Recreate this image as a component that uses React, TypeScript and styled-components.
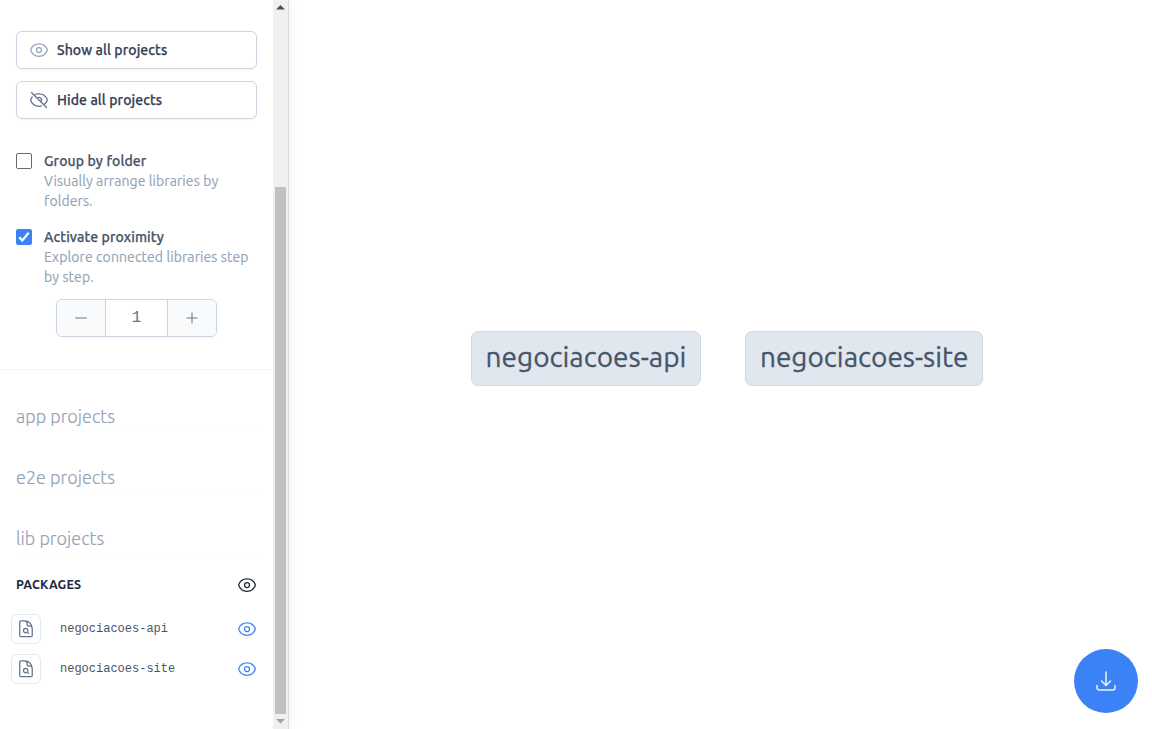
import React from 'react';
import styled, { createGlobalStyle } from 'styled-components';
import {
  HiOutlineArrowDownTray,
  HiOutlineDocumentMagnifyingGlass,
  HiOutlineEye,
  HiOutlineEyeSlash,
  HiOutlinePlus,
} from 'react-icons/hi2';

const GlobalStyle = createGlobalStyle`
  *, *::before, *::after { box-sizing: border-box; }
  body { margin: 0; background: #fff; overflow: hidden; }
  body, button, input { font-family: Ubuntu, "Noto Sans", sans-serif; }
  h2, h3, p, ul { margin: 0; padding: 0; font-weight: inherit; }
  svg { display: block; flex: none; }
`;

const Page = styled.div`
  display: flex;
  height: 729px;
  width: 1152px;
  background: #fff;
`;

const Sidebar = styled.aside`
  display: flex;
  width: 289px;
  flex: none;
  border-right: 1px solid #dcdcdc;
  box-shadow: 0 0 10px rgba(0, 0, 0, 0.07);
`;

const SidebarBody = styled.div`
  width: 273px;
  flex: none;
  overflow: hidden;
`;

const ScrollTrack = styled.div`
  width: 15px;
  flex: none;
  display: flex;
  flex-direction: column;
  align-items: center;
  background: #f0f0f0;
`;

const ScrollArrow = styled.svg`
  width: 15px;
  height: 15px;
`;

const ScrollThumb = styled.div`
  width: 11px;
  height: 527px;
  margin-top: 172px;
  background: #c1c1c1;
`;

const Actions = styled.div`
  display: flex;
  flex-direction: column;
  gap: 12px;
  padding: 31px 16px 0;
`;

const ActionButton = styled.button<{ $iconColor: string }>`
  display: flex;
  align-items: center;
  gap: 8px;
  height: 38px;
  padding: 0 12px;
  border: 1px solid #cbd5e1;
  border-radius: 6px;
  background: #fff;
  color: #334155;
  font-size: 14px;
  font-weight: 500;
  line-height: 20px;
  letter-spacing: 0.09px;
  -webkit-text-stroke: 0.25px #334155;
  white-space: nowrap;
  box-shadow: 0 1px 2px rgba(0, 0, 0, 0.05);
  svg { color: ${p => p.$iconColor}; }
`;

const Options = styled.div`
  display: flex;
  flex-direction: column;
  gap: 16px;
  padding: 32px 16px 0;
`;

const Option = styled.label`
  display: flex;
  align-items: flex-start;
  gap: 12px;
`;

const Checkbox = styled.span<{ $checked?: boolean }>`
  display: flex;
  width: 16px;
  height: 16px;
  margin-top: 2px;
  flex: none;
  border: 1px solid ${p => (p.$checked ? '#3b82f6' : '#6b6b6b')};
  border-radius: 2px;
  background: ${p => (p.$checked ? '#3b82f6' : '#fff')};
`;

const OptionText = styled.div`
  font-size: 14px;
  line-height: 20px;
  letter-spacing: 0.09px;
  color: #94a3b8;
  -webkit-text-stroke: 0.15px #94a3b8;
`;

const OptionTitle = styled.p`
  color: #475569;
  font-weight: 500;
  letter-spacing: 0.12px;
  -webkit-text-stroke: 0.25px #475569;
`;

const Stepper = styled.div`
  display: flex;
  width: 161px;
  height: 38px;
  margin: 12px 0 0 56px;
  border: 1px solid #cbd5e1;
  border-radius: 6px;
  overflow: hidden;
  box-shadow: 0 1px 2px rgba(0, 0, 0, 0.05);
`;

const StepButton = styled.button`
  display: flex;
  align-items: center;
  justify-content: center;
  width: 48px;
  padding: 0;
  border: 0;
  background: #f8fafc;
  color: #64748b;
`;

const StepValue = styled.span`
  width: 63px;
  border: solid #cbd5e1;
  border-width: 0 1px;
  background: #fff;
  color: #64748b;
  font: 16px/36px "Liberation Mono", monospace;
  text-align: center;
`;

const Divider = styled.div`
  height: 1px;
  margin-top: 32px;
  background: #f4f5f7;
`;

const Projects = styled.div`
  padding: 32px 16px 0;
`;

const GroupTitle = styled.h2`
  height: 29px;
  margin-bottom: 32px;
  border-bottom: 1px solid #fcfcfd;
  color: #94a3b8;
  font-size: 18px;
  font-weight: 300;
  line-height: 28px;
  letter-spacing: 0.03px;
  -webkit-text-stroke: 0.15px #94a3b8;
  white-space: nowrap;

  &:last-of-type { margin-bottom: 0; }
`;

const FolderHeader = styled.div`
  display: flex;
  justify-content: space-between;
  align-items: center;
  height: 20px;
  margin-top: 22px;
  color: #1e293b;
`;

const FolderTitle = styled.h3`
  padding-bottom: 2px;
  font-size: 12.5px;
  font-weight: 700;
  line-height: 18px;
  letter-spacing: 0.15px;
`;

const PackageList = styled.ul`
  display: flex;
  flex-direction: column;
  gap: 10px;
  margin: 19px 0 0 -5px;
  list-style: none;
`;

const PackageRow = styled.li`
  display: flex;
  align-items: center;
  height: 30px;
  color: #3b82f6;
`;

const FocusButton = styled.button`
  display: flex;
  align-items: center;
  justify-content: center;
  width: 30px;
  height: 30px;
  padding: 0;
  border: 1px solid #e2e8f0;
  border-radius: 6px;
  background: #fff;
  color: #64748b;
`;

const PackageName = styled.span`
  flex: 1;
  margin-left: 19px;
  color: #475569;
  font: 12px/16px "Liberation Mono", monospace;
`;

const Canvas = styled.main`
  position: relative;
  flex: 1;
`;

const Node = styled.div<{ $x: number; $width: number }>`
  position: absolute;
  top: 331px;
  left: ${p => p.$x}px;
  width: ${p => p.$width}px;
  height: 55px;
  border: 1px solid #d0dae5;
  border-radius: 7px;
  background: #e1e7ef;
  color: #475569;
  font-size: 28px;
  line-height: 50px;
  text-align: center;
  -webkit-text-stroke: 0.3px #475569;
  white-space: nowrap;
`;

const DownloadButton = styled.button`
  position: absolute;
  right: 14px;
  bottom: 16px;
  display: flex;
  align-items: center;
  justify-content: center;
  width: 64px;
  height: 64px;
  padding: 0;
  border: 0;
  border-radius: 50%;
  background: #3b82f6;
  color: #f1f5f9;
`;

const packages = ['negociacoes-api', 'negociacoes-site'];

export default function App() {
  return (
    <Page>
      <GlobalStyle />
      <Sidebar>
        <SidebarBody>
          <Actions>
            <ActionButton $iconColor="#94a3b8">
              <HiOutlineEye size={20} />
              Show all projects
            </ActionButton>
            <ActionButton $iconColor="#64748b">
              <HiOutlineEyeSlash size={20} />
              Hide all projects
            </ActionButton>
          </Actions>

          <Options>
            <Option>
              <Checkbox />
              <OptionText>
                <OptionTitle>Group by folder</OptionTitle>
                <p>Visually arrange libraries by folders.</p>
              </OptionText>
            </Option>
            <Option>
              <Checkbox $checked>
                <svg width="14" height="14" viewBox="0 0 14 14" fill="none" stroke="#fff" strokeWidth="2.2">
                  <path d="M2.2 7.4 5.3 10.4 11.7 2.7" />
                </svg>
              </Checkbox>
              <OptionText>
                <OptionTitle>Activate proximity</OptionTitle>
                <p>Explore connected libraries step by step.</p>
              </OptionText>
            </Option>
          </Options>

          <Stepper>
            <StepButton>
              <svg width="16" height="16" viewBox="0 0 24 24" fill="none" stroke="currentColor" strokeWidth="1.5" strokeLinecap="round">
                <path d="M20 12H4" />
              </svg>
            </StepButton>
            <StepValue>1</StepValue>
            <StepButton><HiOutlinePlus size={16} /></StepButton>
          </Stepper>

          <Divider />

          <Projects>
            <GroupTitle>app projects</GroupTitle>
            <GroupTitle>e2e projects</GroupTitle>
            <GroupTitle>lib projects</GroupTitle>
            <FolderHeader>
              <FolderTitle>PACKAGES</FolderTitle>
              <HiOutlineEye size={20} />
            </FolderHeader>
            <PackageList>
              {packages.map(name => (
                <PackageRow key={name}>
                  <FocusButton><HiOutlineDocumentMagnifyingGlass size={20} /></FocusButton>
                  <PackageName>{name}</PackageName>
                  <HiOutlineEye size={20} />
                </PackageRow>
              ))}
            </PackageList>
          </Projects>
        </SidebarBody>
        <ScrollTrack>
          <ScrollArrow viewBox="0 0 15 15"><path d="M3 9.5 7.5 5 12 9.5z" fill="#505050" /></ScrollArrow>
          <ScrollThumb />
          <ScrollArrow viewBox="0 0 15 15"><path d="M3 5 7.5 9.5 12 5z" fill="#a3a3a3" /></ScrollArrow>
        </ScrollTrack>
      </Sidebar>
      <Canvas>
        <Node $x={182} $width={230}>negociacoes-api</Node>
        <Node $x={456.3} $width={237.8}>negociacoes-site</Node>
        <DownloadButton><HiOutlineArrowDownTray size={24} /></DownloadButton>
      </Canvas>
    </Page>
  );
}
